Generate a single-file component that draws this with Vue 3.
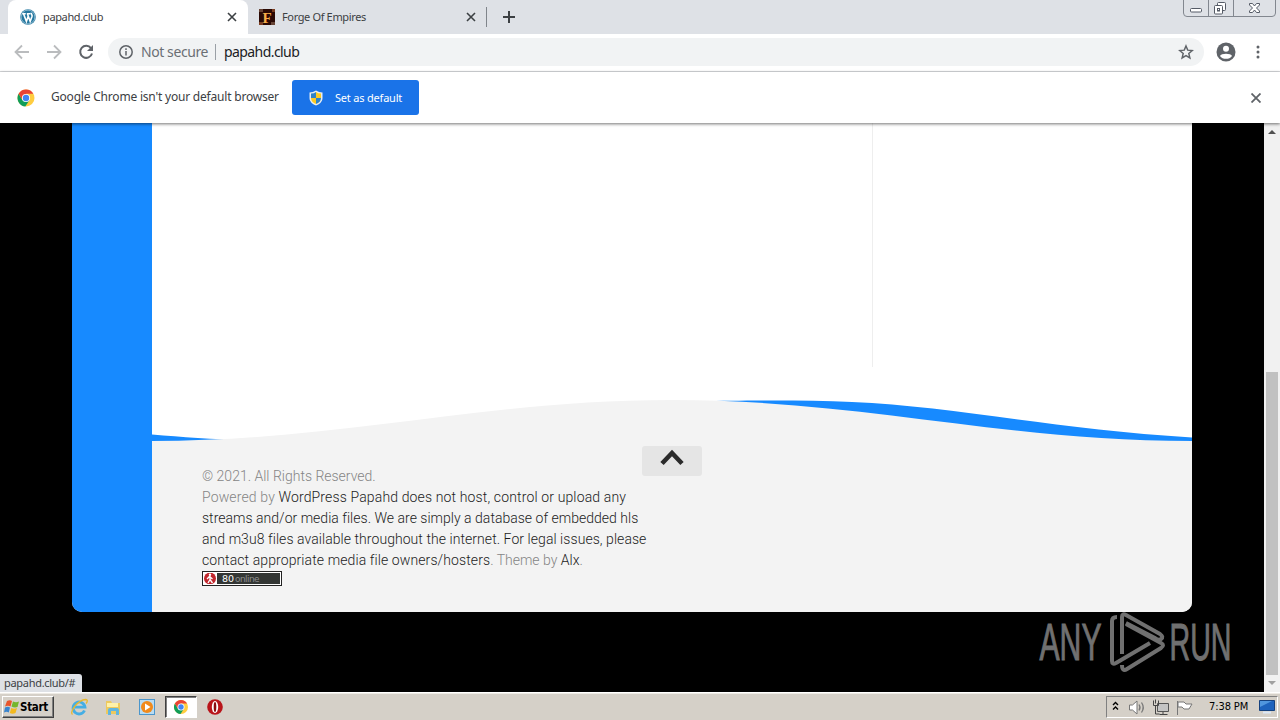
<template>
  <div class="screen">
    <header class="tab-strip">
      <div v-for="(tab, key) in tabs" :key="key" class="tab" :class="{ active: tab.active }">
        <svg v-if="tab.active" class="favicon" viewBox="0 0 16 16">
          <circle cx="8" cy="8" r="7.8" fill="#24779f" />
          <circle cx="8" cy="8" r="6.9" fill="none" stroke="#cfe3ec" stroke-width=".6" />
          <path d="M2.2 4.800h3.600M6.800 4.800h3.600M3.600 5l2.800 7.400L8.200 7.200M7.500 5l2.700 7.400L12 7.500C12.500 6 11 5.500 11.400 3.800" fill="none" stroke="#fff" stroke-width="1.600" />
        </svg>
        <svg v-else class="favicon" viewBox="0 0 16 16">
          <rect width="16" height="16" fill="#2a0904" />
          <path d="M0 0h4v3H0zM12 13h4v3h-4z" fill="#674435" />
          <path d="M0 13h4v3H0zM13 0h3v3h-3z" fill="#7a3c20" />
          <text x="3.400" y="13.600" class="forge-letter">F</text>
        </svg>
        <span class="tab-title">{{ tab.title }}</span>
        <svg class="tab-close" viewBox="0 0 10 10"><path d="M1 1l8 8M9 1L1 9" /></svg>
      </div>
      <span class="tab-line"></span>
      <svg class="new-tab" viewBox="0 0 12 12"><path d="M6 0v12M0 6h12" /></svg>
      <svg class="window-buttons" viewBox="0 0 93 17">
        <path d="M.5 0v13q0 3.500 3.500 3.500h85q3.500 0 3.500-3.500V0M25.500 0v16M50.500 0v16" fill="none" stroke="#82878f" />
        <rect x="7.500" y="8.500" width="11" height="3.500" rx="1" fill="#fff" stroke="#555b66" />
        <rect x="34.500" y="2.500" width="8" height="8" rx="1" fill="#fff" stroke="#555b66" />
        <rect x="31.500" y="5.500" width="8" height="8.500" rx="1" fill="#fff" stroke="#555b66" />
        <rect x="34.500" y="8.500" width="2" height="2.500" fill="#fff" stroke="#555b66" />
        <path d="M66.500 3.500h3l2 2.500 2-2.500h3v1.500L73.500 8l3 3v1.500h-3l-2-2.500-2 2.500h-3V11l3-3-3-3z" fill="#fff" stroke="#555b66" />
      </svg>
    </header>

    <div class="toolbar">
      <svg class="nav-icons" viewBox="0 0 100 24">
        <path d="M29 12H16M22 5.500L15.500 12l6.500 6.500" class="muted" />
        <path d="M47 12h13M54 5.500l6.500 6.500-6.500 6.500" class="muted" />
        <path d="M91 8.200A6 6 0 1 0 92 13.500" class="dark" />
        <path d="M93 5v6h-6z" fill="#5f6368" />
      </svg>
      <div class="address">
        <svg class="info" viewBox="0 0 14 14">
          <circle cx="7" cy="7" r="6.200" fill="none" stroke="#5f6368" stroke-width="1.500" />
          <path d="M7 6v4.500M7 3.300v1.600" stroke="#5f6368" stroke-width="1.500" />
        </svg>
        <span class="secure">Not secure</span>
        <span class="divider"></span>
        <span class="url">papahd.club</span>
        <svg class="star" viewBox="0 0 24 24">
          <path d="M12 3l2.600 6.200 6.700.6-5.100 4.400 1.600 6.600L12 17.300l-5.800 3.500 1.600-6.600-5.100-4.400 6.700-.6z" />
        </svg>
      </div>
      <svg class="avatar" viewBox="0 0 20 20">
        <circle cx="10" cy="10" r="9.500" fill="#5f6368" />
        <circle cx="10" cy="6.800" r="3" fill="#fff" />
        <path d="M4 14c1-3 11-3 12 0-2.500 3.800-9.500 3.800-12 0z" fill="#fff" />
      </svg>
      <svg class="dots" viewBox="0 0 4 14">
        <circle v-for="n in 3" :key="n" cx="2" :cy="n * 5 - 3" r="1.500" fill="#5f6368" />
      </svg>
    </div>

    <div class="infobar">
      <svg class="chrome" viewBox="0 0 18 18">
        <circle cx="9" cy="9" r="8.500" fill="#ffcd40" />
        <path d="M1.600 4.800A8.500 8.500 0 0 0 8.300 17.500L12.600 11 9 9 5.400 11z" fill="#109d58" />
        <path d="M1.600 4.800A8.500 8.500 0 0 1 16.400 4.800H9L5.400 11z" fill="#ea4335" />
        <circle cx="9" cy="9" r="4.100" fill="#fff" />
        <circle cx="9" cy="9" r="3.200" fill="#4285f4" />
      </svg>
      <span class="info-text">Google Chrome isn't your default browser</span>
      <button class="set-default">
        <svg viewBox="0 0 14 16">
          <path d="M7 .5Q10 2.500 13.500 2.500V8c0 4-3.500 6.500-6.500 7.500C4 14.500.5 12 .5 8V2.500Q4 2.500 7 .5z" fill="#e8edf0" />
          <path d="M7 2v6H2V3.600Q5 3.500 7 2zM7 8h5c0 3-2 5-5 6z" fill="#2f83c8" />
          <path d="M7 2v6h5V3.600Q9 3.500 7 2zM7 8H2c0 3 2 5 5 6z" fill="#fccb24" />
        </svg>
        <span>Set as default</span>
      </button>
      <svg class="info-close" viewBox="0 0 10 10"><path d="M.5.500l9 9M9.500.500l-9 9" /></svg>
    </div>

    <main class="viewport">
      <div class="page">
        <div class="side-left"></div>
        <div class="content">
          <div class="columns">
            <div class="main-col"></div>
          </div>
          <svg class="waves" viewBox="0 0 1040 42">
            <path d="M0 34.500C30 37 60 39.500 95 40L0 42zM550 1C590 .5 650-.5 700 2C800 6 900 29 1040 37.500V42H800z" fill="#178aff" />
            <path d="M0 41C190 41 330 0 520 0S850 41 1040 41V42H0z" fill="#f3f3f3" />
          </svg>
          <footer class="footer">
            <div class="credits">
              <p>© 2021. All Rights Reserved.</p>
              <p class="powered">Powered by <a>WordPress</a> <a>Papahd does not host, control or upload any</a></p>
              <p class="stream"><a>streams and/or media files. We are simply a database of embedded hls</a></p>
              <p class="legal"><a>and m3u8 files available throughout the internet. For legal issues, please</a></p>
              <p><a class="contact">contact appropriate media file owners/hosters</a>. Theme by <a>Alx</a>.</p>
              <div class="counter">
                <svg viewBox="0 0 14 13">
                  <rect width="14" height="13" fill="#fff" />
                  <circle cx="7" cy="6.500" r="6" fill="#c1272d" />
                  <circle cx="7" cy="2.800" r="1.200" fill="#fff" />
                  <path d="M7 4v3.500L5 11M7 7.500L9.500 11M4 7l2.500-2.500L9.500 7" fill="none" stroke="#fff" stroke-width="1.300" />
                </svg>
                <b>80</b><span>online</span>
              </div>
            </div>
            <button class="to-top">
              <svg viewBox="0 0 24 18"><path d="M2 14.500L12 4l10 10.500" /></svg>
            </button>
          </footer>
        </div>
      </div>
      <div class="scrollbar">
        <svg viewBox="0 0 16 17"><path d="M4 11l4-4 4 4z" fill="#505050" /></svg>
        <div class="thumb"></div>
        <svg viewBox="0 0 16 17"><path d="M4 6h8l-4 4z" fill="#a0a0a0" /></svg>
      </div>
      <div class="status">papahd.club/#</div>
      <svg class="watermark" viewBox="0 0 200 64">
        <g fill="#969696" stroke="#969696" stroke-width="1">
          <text x="4.500" y="49.500" textLength="62" lengthAdjust="spacingAndGlyphs">ANY</text>
          <text x="134.500" y="49.500" textLength="62" lengthAdjust="spacingAndGlyphs">RUN</text>
        </g>
        <g fill="none" stroke="#969696" stroke-width="4" stroke-linejoin="round">
          <path d="M82 7Q77 7 77 11V51Q77 55 81 53L115 33" />
          <path d="M87 44V7Q87 3 91 5L125 24Q129 27 126 29Q124 31 120 28L91 13" />
          <path d="M87 55Q87 62 92 59L126 38Q130 35 126 33L91 14" />
        </g>
      </svg>
    </main>

    <footer class="taskbar">
      <button class="start">
        <svg viewBox="0 0 16 16">
          <path d="M3 2Q6 .5 8 2L6.500 7.500Q4 6 1 7.500z" fill="#e9552b" />
          <path d="M9 2.500Q12 4 15 2.500L13.500 8Q10.500 9 7.500 7.500z" fill="#74b62d" />
          <path d="M1 8.500Q4 7 6 8.500L4.800 13.500Q2.500 12 0 13.500z" fill="#3984ce" />
          <path d="M7.300 9Q10 10.500 13 9L11.500 14Q8.500 15.500 5.800 14z" fill="#f3b91e" />
        </svg>
        <span>Start</span>
      </button>
      <div class="launch">
        <svg viewBox="0 0 18 18">
          <path d="M14.500 12.500A6 6 0 1 1 15 9.200H5" fill="none" stroke="#45aee4" stroke-width="2.800" />
          <path d="M2.500 16.500C-1 14 8 2 15.500 1.500c3 0 1.500 3 .5 4" fill="none" stroke="#e9b82d" stroke-width="1.300" />
        </svg>
      </div>
      <div class="launch">
        <svg viewBox="0 0 18 18">
          <path d="M2 3h5l1 2h8v11H2z" fill="#edc95e" />
          <path d="M3 5h11v4H3z" fill="#fff1a8" />
          <path d="M4 17v-5q0-2 2-2h7q2 0 2 2v5h-3v-4H7v4z" fill="#61b5df" />
        </svg>
      </div>
      <div class="launch">
        <svg viewBox="0 0 18 18">
          <rect x="1.500" y="1.500" width="15" height="15" fill="#b9dcf2" stroke="#4b96cc" />
          <circle cx="9" cy="9" r="6" fill="#f18a1b" />
          <path d="M7 5.500l5.500 3.500L7 12.500z" fill="#fff" />
        </svg>
      </div>
      <div class="launch pressed">
        <svg viewBox="0 0 18 18">
          <circle cx="9" cy="9" r="7" fill="#ffcd40" />
          <path d="M2.900 5.500A7 7 0 0 0 8.500 16L12 10.700 6 10.700z" fill="#109d58" />
          <path d="M2.900 5.500A7 7 0 0 1 15.100 5.500H9L6 10.700z" fill="#ea4335" />
          <circle cx="9" cy="9" r="3.500" fill="#fff" />
          <circle cx="9" cy="9" r="2.700" fill="#4285f4" />
        </svg>
      </div>
      <div class="launch">
        <svg viewBox="0 0 18 18">
          <circle cx="9" cy="9" r="7.800" fill="#b9141a" />
          <ellipse cx="9" cy="9" rx="3.200" ry="5.900" fill="#fff" />
          <ellipse cx="9" cy="9" rx="1.300" ry="5" fill="#8b0c10" />
        </svg>
      </div>
      <div class="tray">
        <svg class="tray-icons" viewBox="0 0 92 20">
          <path d="M6 8l2.500-2.500L11 8M6 12.500L8.500 10l2.500 2.500" fill="none" stroke="#000" stroke-width="1.400" />
          <path d="M22.500 8h3L30 4v13l-4.500-4h-3z" fill="#fff" stroke="#777" />
          <path d="M32 7.500q2 3 0 6M34.500 5.500q3.500 5 0 10" fill="none" stroke="#777" stroke-width="1.300" />
          <path d="M50.500 6.500h11v8h-11z" fill="#c4c4c4" stroke="#555" />
          <path d="M52.500 17.500h8M56 15v2M48.500 9v8h4M46.500 3.500v5h5v-5M48.500 2.500v4" fill="none" stroke="#444" />
          <path d="M70.500 4v14M71 5h6l2 2h6l-3 5h-5l-2-2h-4z" fill="#fff" stroke="#777" />
        </svg>
        <span class="clock">7:38 PM</span>
        <svg class="desktop-icon" viewBox="0 0 16 15">
          <path d="M.5 1.500h15v10H.5z" fill="#1e63bd" stroke="#16427f" />
          <path d="M1 2h12L1 8z" fill="#5096de" />
          <path d="M4 13.500h8" stroke="#dce8f6" stroke-width="2" />
        </svg>
      </div>
    </footer>
  </div>
</template>

<script setup>
import { ref } from 'vue'

const tabs = ref([
  { title: 'papahd.club', active: true },
  { title: 'Forge Of Empires', active: false }
])
</script>

<style>
body {
  margin: 0;
  overflow: hidden;
}
</style>

<style scoped>
.screen {
  width: 1280px;
  height: 720px;
  display: flex;
  flex-direction: column;
  overflow: hidden;
  font-family: "Noto Sans", sans-serif;
  font-size: 12px;
  color: #3c4043;
}
.screen * {
  box-sizing: border-box;
}
svg {
  display: block;
  flex: none;
}
button {
  border: 0;
  padding: 0;
  font-family: inherit;
}
.tab-strip {
  height: 34px;
  flex: none;
  display: flex;
  align-items: center;
  padding-left: 8px;
  background: #dee1e6;
}
.tab {
  display: flex;
  align-items: center;
  width: 239px;
  height: 34px;
  padding: 0 11px 0 12px;
}
.tab.active {
  width: 240px;
  background: #fff;
  border-radius: 8px 8px 0 0;
}
.favicon {
  width: 16px;
  height: 16px;
  margin-right: 7px;
}
.tab:not(.active) {
  padding-left: 11px;
}
.forge-letter {
  font: bold 15px "Liberation Serif", serif;
  fill: #f6ae49;
}
.tab-title {
  flex: 1;
  margin-top: -2px;
  font-size: 11px;
  letter-spacing: -.36px;
}
.tab-close {
  width: 10px;
  height: 10px;
  stroke: #3c4043;
  stroke-width: 1.6;
}
.tab-line {
  width: 1px;
  height: 20px;
  margin-left: -1px;
  background: #80858b;
}
.new-tab {
  width: 12px;
  height: 12px;
  margin-left: 16px;
  stroke: #3c4043;
  stroke-width: 2;
}
.window-buttons {
  width: 93px;
  height: 17px;
  margin: 0 4px 0 auto;
  align-self: flex-start;
}
.toolbar {
  height: 38px;
  flex: none;
  display: flex;
  align-items: center;
  padding-bottom: 1px;
  background: #fff;
  border-bottom: 1px solid #d9dbde;
}
.nav-icons {
  width: 100px;
  height: 24px;
  margin-right: 8px;
  fill: none;
}
.muted {
  stroke: #babcbe;
  stroke-width: 1.8;
}
.dark {
  stroke: #5f6368;
  stroke-width: 2;
}
.address {
  width: 1096px;
  height: 28px;
  display: flex;
  align-items: center;
  padding: 0 10px 0 11px;
  border-radius: 14px;
  background: #f1f3f4;
  font-size: 14px;
}
.info {
  width: 14px;
  height: 14px;
  margin-right: 8px;
}
.secure {
  width: 67px;
  margin-top: -1px;
  white-space: nowrap;
  letter-spacing: -.42px;
  color: #6b6f74;
}
.divider {
  width: 1px;
  height: 16px;
  margin: 0 8px 0 7px;
  background: #9aa0a6;
}
.url {
  margin-top: -1px;
  letter-spacing: -.58px;
  color: #202124;
}
.star {
  width: 16px;
  height: 16px;
  margin-left: auto;
  fill: none;
  stroke: #5f6368;
  stroke-width: 2.2;
}
.avatar {
  width: 20px;
  height: 20px;
  margin-left: 12px;
}
.dots {
  width: 4px;
  height: 14px;
  margin-left: 20px;
}
.infobar {
  position: relative;
  z-index: 2;
  height: 51px;
  flex: none;
  display: flex;
  align-items: center;
  padding: 0 19px 0 17px;
  background: #fff;
  box-shadow: 0 1px 3px rgba(0, 0, 0, .55);
}
.chrome {
  width: 18px;
  height: 18px;
}
.info-text {
  width: 241px;
  margin: -2px 0 0 16px;
  white-space: nowrap;
  letter-spacing: -.2px;
}
.set-default {
  display: flex;
  align-items: center;
  width: 127px;
  height: 35px;
  padding-left: 17px;
  border-radius: 3px;
  background: #1a73e8;
  color: #fff;
  font-size: 11px;
  letter-spacing: -.2px;
  white-space: nowrap;
}
.set-default svg {
  width: 14px;
  height: 16px;
  margin-right: 12px;
}
.set-default span {
  margin-top: -1px;
}
.info-close {
  width: 10px;
  height: 10px;
  margin-left: auto;
  stroke: #5f6368;
  stroke-width: 1.8;
}
.viewport {
  position: relative;
  height: 569px;
  flex: none;
  display: flex;
  background: #000;
}
.page {
  width: 1120px;
  height: 489px;
  margin: 0 72px;
  display: flex;
  overflow: hidden;
  border-radius: 0 0 10px 10px;
  background: #fff;
}
.side-left {
  width: 80px;
  background: #178aff;
}
.content {
  width: 1040px;
}
.columns {
  height: 277px;
}
.main-col {
  width: 721px;
  height: 244px;
  border-right: 1px solid #eee;
}
.waves {
  width: 1040px;
  height: 42px;
}
.footer {
  height: 170px;
  display: flex;
  background: #f3f3f3;
}
.credits {
  width: 490px;
  padding: 24px 0 0 50px;
  font: 300 14px/21px Roboto, sans-serif;
  color: #858585;
  white-space: nowrap;
}
.credits p {
  margin: 0;
}
.credits a {
  color: #1c1c1c;
}
.powered {
  letter-spacing: .14px;
}
.stream {
  letter-spacing: .02px;
}
.legal {
  letter-spacing: .06px;
}
.contact {
  letter-spacing: .1px;
}
.counter {
  display: flex;
  align-items: center;
  width: 80px;
  height: 15px;
  border: 1px solid #222;
  outline: 1px solid #fff;
  outline-offset: -2px;
  background: #333634;
  font: 9px "DejaVu Sans", sans-serif;
  color: #8e8e8e;
}
.counter svg {
  width: 14px;
  height: 13px;
  margin-right: 5px;
}
.counter b {
  margin-right: 1px;
  color: #fff;
  font-size: 9.5px;
  font-weight: normal;
}
.counter span {
  letter-spacing: -.6px;
}
.to-top {
  width: 60px;
  height: 30px;
  margin-top: 4px;
  border-radius: 3px;
  background: #e5e5e5;
}
.to-top svg {
  width: 24px;
  height: 18px;
  margin: -6px auto 0;
  fill: none;
  stroke: #2b2b2b;
  stroke-width: 4.6;
}
.scrollbar {
  width: 16px;
  display: flex;
  flex-direction: column;
  background: #f1f1f1;
}
.scrollbar svg {
  width: 16px;
  height: 17px;
}
.thumb {
  width: 12px;
  height: 304px;
  margin: 232px 2px 0;
  background: #c1c1c1;
}
.status {
  position: absolute;
  left: 0;
  bottom: 0;
  width: 82px;
  height: 18px;
  padding-left: 4px;
  border-radius: 0 3px 0 0;
  background: #dee1e6;
  font-size: 11px;
  line-height: 18px;
  letter-spacing: -.3px;
}
.watermark {
  position: absolute;
  left: 1035px;
  top: 487px;
  width: 200px;
  height: 64px;
  overflow: visible;
  opacity: .75;
  font: 52px "Liberation Sans Narrow", "Liberation Sans", sans-serif;
}
.taskbar {
  height: 28px;
  flex: none;
  display: flex;
  align-items: center;
  padding-left: 2px;
  border-top: 1px solid #fff;
  background: #d5d0c8;
  box-shadow: inset 0 1px #eeebe5;
}
.start {
  display: flex;
  align-items: center;
  width: 52px;
  height: 22px;
  padding-left: 1px;
  margin-right: 9px;
  border: 1px solid;
  border-color: #fff #404040 #404040 #fff;
  box-shadow: inset -1px -1px #808080;
  background: #d5d0c8;
  font: bold 11.5px "DejaVu Sans Condensed", sans-serif;
  letter-spacing: -.3px;
  color: #000;
}
.start svg {
  width: 16px;
  height: 16px;
}
.launch {
  width: 32px;
  height: 22px;
  margin-right: 2px;
  display: flex;
  align-items: center;
  justify-content: center;
}
.launch svg {
  width: 18px;
  height: 18px;
}
.pressed {
  background: #fff;
  border: 1px solid;
  border-color: #404040 #fff #fff #404040;
  box-shadow: inset 1px 1px #808080;
}
.tray {
  display: flex;
  align-items: center;
  width: 172px;
  height: 22px;
  margin: 0 2px 0 auto;
  border: 1px solid;
  border-color: #808080 #fff #fff #808080;
}
.tray-icons {
  width: 92px;
  height: 20px;
}
.clock {
  width: 50px;
  margin-left: 10px;
  white-space: nowrap;
  font: 11px "DejaVu Sans Condensed", sans-serif;
  letter-spacing: -.1px;
  color: #000;
}
.desktop-icon {
  width: 16px;
  height: 15px;
}
</style>
